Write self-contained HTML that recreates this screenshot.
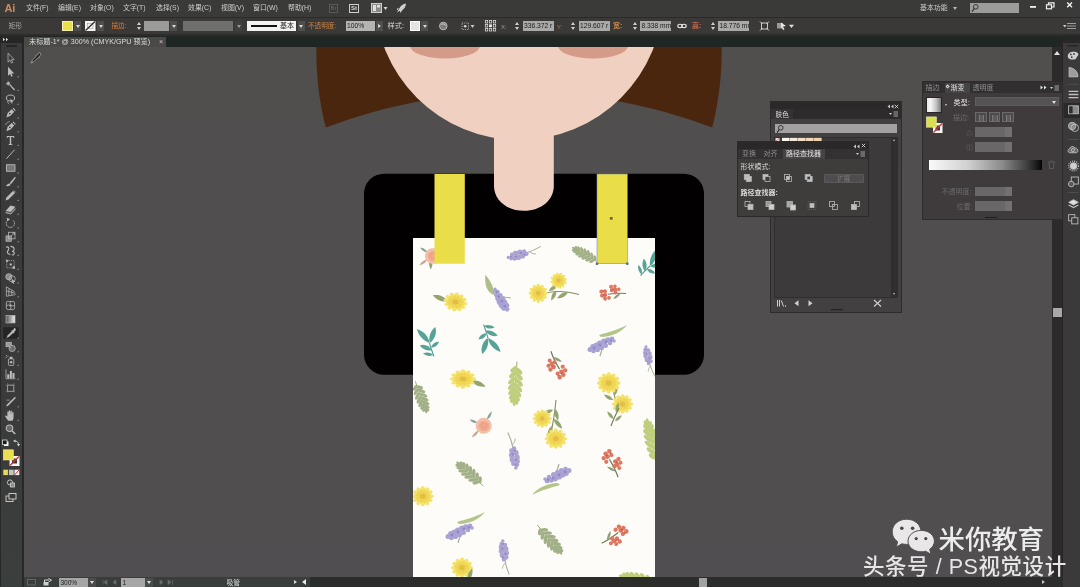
<!DOCTYPE html>
<html lang="zh-CN">
<head>
<meta charset="utf-8">
<title>Adobe Illustrator</title>
<style>
*{box-sizing:border-box;margin:0;padding:0}
html,body{width:1080px;height:587px;overflow:hidden;background:#514f50}
body{font-family:"Liberation Sans","Noto Sans CJK SC",sans-serif;color:#d6d6d6;font-size:7px;line-height:1;position:relative}
.abs{position:absolute}
#app{position:absolute;left:0;top:0;width:1080px;height:587px;overflow:hidden;background:#514f50;will-change:transform}
#canvas{position:absolute;left:0;top:0;width:1080px;height:587px}
#menubar{position:absolute;left:0;top:0;width:1080px;height:17px;background:#3a3b38}
#ctrlbar{position:absolute;left:0;top:17px;width:1080px;height:19px;background:#3a3937;border-top:1px solid #2a2a28}
#tabbar{position:absolute;left:0;top:33.5px;width:1080px;height:13.5px;background:#202623;border-top:2.5px solid #2c2d2b}
#doctab{position:absolute;left:24px;top:37px;width:142px;height:10px;background:#4a4947;color:#dcdcdc;font-size:7.15px;line-height:10px;padding-left:5px;white-space:nowrap}
.mi{position:absolute;top:3.2px;font-size:6.9px;line-height:9px;color:#cecece;white-space:nowrap}
.ct{position:absolute;top:21px;font-size:7.2px;line-height:10px;white-space:nowrap}
.fld{position:absolute;top:21px;height:10px;background:#a9a9a7;color:#1c1c1c;font-size:6.7px;line-height:10px;padding-left:1.5px;white-space:nowrap;overflow:hidden}
.dd{position:absolute;top:21px;height:10px;width:7px;background:#4e4e4c}
.dd:after{content:"";position:absolute;left:1.5px;top:3.5px;border-left:2px solid transparent;border-right:2px solid transparent;border-top:3px solid #d8d8d8}
.spin{position:absolute;top:21px;width:5px;height:10px}
.spin:before{content:"";position:absolute;left:0;top:1px;border-left:2.5px solid transparent;border-right:2.5px solid transparent;border-bottom:3px solid #cfcfcf}
.spin:after{content:"";position:absolute;left:0;top:6px;border-left:2.5px solid transparent;border-right:2.5px solid transparent;border-top:3px solid #cfcfcf}
#tools{position:absolute;left:0;top:36px;width:24px;height:551px;background:linear-gradient(#3a3a3a,#3a3a3a 60%,#3a3e3d);border-left:1px solid #282a29;border-right:2px solid #282828}
#toolhead{position:absolute;left:0;top:36px;width:24px;height:7px;background:#262626}
#toolgrip{position:absolute;left:6px;top:44.5px;width:11px;height:2px;background:#262626}
#vscroll{position:absolute;left:1052px;top:47px;width:10.8px;height:530px;background:#2d2a2b}
#dock{position:absolute;left:1062px;top:36.5px;width:18px;height:551px;background:#3b393a;border-left:1px solid #262425}
#dockhead{position:absolute;left:1062.5px;top:36.5px;width:17.5px;height:6.5px;background:#272727}
#status{position:absolute;left:24px;top:577px;width:1039px;height:10px;background:#2a2d2a}
.panel{position:absolute;background:#423f40;border:1px solid #2c2a2b}
.ptxt{position:absolute;font-size:7px;line-height:9px;white-space:nowrap;color:#d8d8d8}
#wm1{position:absolute;left:938.6px;top:525px;font-size:26.4px;line-height:30px;color:#ececec;white-space:nowrap;letter-spacing:-0.1px;font-weight:500}
#wm2{position:absolute;left:863px;top:554px;font-size:21.5px;line-height:26px;color:#e6e6e6;white-space:nowrap;letter-spacing:0.55px;font-weight:500}
</style>
</head>
<body>
<div id="app">

<!-- ===================== ARTWORK ===================== -->
<svg id="canvas" width="1080" height="587" viewBox="0 0 1080 587">
  <defs>
    <linearGradient id="bgg" x1="0" y1="0" x2="0" y2="1">
      <stop offset="0" stop-color="#504f4c"/>
      <stop offset="0.45" stop-color="#514e50"/>
      <stop offset="1" stop-color="#514e51"/>
    </linearGradient>
    <clipPath id="apronclip"><rect x="413" y="238" width="242" height="339"/></clipPath>
    <filter id="soft" x="-5%" y="-5%" width="110%" height="110%"><feGaussianBlur stdDeviation="0.7"/></filter>

<g id="daisy"><g fill="#f3df55"><ellipse cx="0" cy="-6.3" rx="2.3" ry="4.9" transform="rotate(0)"/><ellipse cx="0" cy="-6.3" rx="2.3" ry="4.9" transform="rotate(30)"/><ellipse cx="0" cy="-6.3" rx="2.3" ry="4.9" transform="rotate(60)"/><ellipse cx="0" cy="-6.3" rx="2.3" ry="4.9" transform="rotate(90)"/><ellipse cx="0" cy="-6.3" rx="2.3" ry="4.9" transform="rotate(120)"/><ellipse cx="0" cy="-6.3" rx="2.3" ry="4.9" transform="rotate(150)"/><ellipse cx="0" cy="-6.3" rx="2.3" ry="4.9" transform="rotate(180)"/><ellipse cx="0" cy="-6.3" rx="2.3" ry="4.9" transform="rotate(210)"/><ellipse cx="0" cy="-6.3" rx="2.3" ry="4.9" transform="rotate(240)"/><ellipse cx="0" cy="-6.3" rx="2.3" ry="4.9" transform="rotate(270)"/><ellipse cx="0" cy="-6.3" rx="2.3" ry="4.9" transform="rotate(300)"/><ellipse cx="0" cy="-6.3" rx="2.3" ry="4.9" transform="rotate(330)"/></g><g fill="#ecd03c"><ellipse cx="0" cy="-4.4" rx="1.5" ry="3.4" transform="rotate(15)"/><ellipse cx="0" cy="-4.4" rx="1.5" ry="3.4" transform="rotate(45)"/><ellipse cx="0" cy="-4.4" rx="1.5" ry="3.4" transform="rotate(75)"/><ellipse cx="0" cy="-4.4" rx="1.5" ry="3.4" transform="rotate(105)"/><ellipse cx="0" cy="-4.4" rx="1.5" ry="3.4" transform="rotate(135)"/><ellipse cx="0" cy="-4.4" rx="1.5" ry="3.4" transform="rotate(165)"/><ellipse cx="0" cy="-4.4" rx="1.5" ry="3.4" transform="rotate(195)"/><ellipse cx="0" cy="-4.4" rx="1.5" ry="3.4" transform="rotate(225)"/><ellipse cx="0" cy="-4.4" rx="1.5" ry="3.4" transform="rotate(255)"/><ellipse cx="0" cy="-4.4" rx="1.5" ry="3.4" transform="rotate(285)"/><ellipse cx="0" cy="-4.4" rx="1.5" ry="3.4" transform="rotate(315)"/><ellipse cx="0" cy="-4.4" rx="1.5" ry="3.4" transform="rotate(345)"/></g><circle r="2.9" fill="#e2b42c"/></g>
<g id="leaf"><path d="M0 0 C-3.2 -4 -2.8 -9 0 -14 C2.8 -9 3.2 -4 0 0Z" fill="#86995c"/></g>
<g id="lav"><path d="M0 3 C0.5 9 1.5 14 3 19" stroke="#9aa58a" stroke-width="1.1" fill="none"/><path d="M0.5 6 C-2 8 -3 10 -3.5 12" stroke="#9aa58a" stroke-width="0.9" fill="none"/><g fill="#a197cc"><circle cx="0" cy="-17" r="1.8"/><circle cx="-1.6" cy="-14" r="2.3"/><circle cx="1.8" cy="-12.5" r="2.4"/><circle cx="-2.4" cy="-10.5" r="2.6"/><circle cx="2.4" cy="-8.5" r="2.7"/><circle cx="-2.6" cy="-6.5" r="2.8"/><circle cx="2.4" cy="-4" r="2.8"/><circle cx="-2.2" cy="-2" r="2.7"/><circle cx="1.8" cy="0.5" r="2.5"/><circle cx="-1" cy="2.5" r="2.2"/></g><g fill="#877db8"><circle cx="-1" cy="-9" r="1.3"/><circle cx="1.2" cy="-3" r="1.3"/><circle cx="0" cy="-14" r="1.1"/><circle cx="-1.5" cy="0.5" r="1.1"/></g></g>
<g id="lavl"><path d="M-3 -8 C5 -10.5 14 -12.5 25 -18 C19 -10.5 10 -6.5 -1 -6 Z" fill="#a9bd7c"/><path d="M2 2 C0 6 -1 9 -2 13" stroke="#9aa58a" stroke-width="1.2" fill="none"/><g fill="#9e96cf"><circle cx="-12" cy="6.5" r="2.5"/><circle cx="-9" cy="4" r="2.9"/><circle cx="-8.5" cy="8" r="2.3"/><circle cx="-5.5" cy="2.5" r="3.1"/><circle cx="-4.5" cy="6.5" r="2.6"/><circle cx="-2" cy="0.5" r="3.1"/><circle cx="-0.5" cy="4.5" r="2.6"/><circle cx="2" cy="-1.5" r="3"/><circle cx="3.5" cy="2.5" r="2.5"/><circle cx="6" cy="-3" r="2.8"/><circle cx="8" cy="0" r="2.3"/><circle cx="10" cy="-4" r="2.4"/><circle cx="12" cy="-2" r="1.8"/></g><g fill="#8279bb"><circle cx="-8" cy="5" r="1.4"/><circle cx="-2" cy="2" r="1.4"/><circle cx="4" cy="-1" r="1.4"/><circle cx="9" cy="-2.5" r="1.2"/></g></g>
<g id="lavc"><g fill="#9e96cf"><circle cx="-12" cy="0.5" r="2.5"/><circle cx="-9" cy="-2" r="2.9"/><circle cx="-8.5" cy="2.5" r="2.4"/><circle cx="-5.5" cy="-2.5" r="3.1"/><circle cx="-4.5" cy="2" r="2.7"/><circle cx="-1.5" cy="-2.5" r="3.1"/><circle cx="-0.5" cy="2" r="2.7"/><circle cx="2.5" cy="-2.2" r="2.9"/><circle cx="4" cy="1.5" r="2.5"/><circle cx="6.5" cy="-1.5" r="2.7"/><circle cx="8.5" cy="1" r="2.2"/><circle cx="10.5" cy="-0.8" r="2.2"/><circle cx="12.5" cy="0" r="1.7"/></g><g fill="#8279bb"><circle cx="-8" cy="0" r="1.4"/><circle cx="-2" cy="0" r="1.4"/><circle cx="4" cy="-0.5" r="1.3"/><circle cx="9" cy="0" r="1.1"/></g></g>
<g id="lleaf"><path d="M0 0 C6 -4.5 15 -4.5 26 0 C15 2.5 6 2.5 0 0Z" fill="#a3b678"/></g>
<g id="fern"><path d="M0 21 L0 -16" stroke="#8b9a60" stroke-width="1" fill="none"/><ellipse cx="0" cy="-2.75" rx="2.1" ry="3.35" transform="translate(0,-15) rotate(-38)"/><ellipse cx="0" cy="-2.75" rx="2.1" ry="3.35" transform="translate(0,-13.5) rotate(38)"/><ellipse cx="0" cy="-3.75" rx="2.1" ry="4.35" transform="translate(0,-10.5) rotate(-40.5)"/><ellipse cx="0" cy="-3.75" rx="2.1" ry="4.35" transform="translate(0,-9) rotate(40.5)"/><ellipse cx="0" cy="-4.5" rx="2.1" ry="5.1" transform="translate(0,-5.5) rotate(-43)"/><ellipse cx="0" cy="-4.5" rx="2.1" ry="5.1" transform="translate(0,-4) rotate(43)"/><ellipse cx="0" cy="-4.75" rx="2.1" ry="5.35" transform="translate(0,-0.5) rotate(-45.5)"/><ellipse cx="0" cy="-4.75" rx="2.1" ry="5.35" transform="translate(0,1) rotate(45.5)"/><ellipse cx="0" cy="-4.75" rx="2.1" ry="5.35" transform="translate(0,4.5) rotate(-48)"/><ellipse cx="0" cy="-4.75" rx="2.1" ry="5.35" transform="translate(0,6) rotate(48)"/><ellipse cx="0" cy="-4.25" rx="2.1" ry="4.85" transform="translate(0,9.5) rotate(-50.5)"/><ellipse cx="0" cy="-4.25" rx="2.1" ry="4.85" transform="translate(0,11) rotate(50.5)"/><ellipse cx="0" cy="-3.5" rx="2.1" ry="4.1" transform="translate(0,14) rotate(-53)"/><ellipse cx="0" cy="-3.5" rx="2.1" ry="4.1" transform="translate(0,15.5) rotate(53)"/><ellipse cx="0" cy="-18" rx="1.6" ry="3.6"/></g>
<g id="teal"><path d="M2.5 14 C1.5 9 0.5 4 0 0" stroke="#3f978a" stroke-width="1.1" fill="none"/><path d="M0 0 C-6 -3 -10 -9 -10.5 -15.5 C-4 -12.5 0 -6.5 0 0Z"/><path d="M0.3 0 C-0.5 -5.5 2.5 -12 8 -15 C9 -9 6 -3 0.3 0Z"/><path d="M1.5 7.5 C-3 8 -7.5 5.5 -10 1 C-5 0 -0.5 3 1.5 7.5Z"/><path d="M1 4.5 C2.5 1 6 -0.5 9.5 0 C8 3.5 4.5 5.5 1 4.5Z"/><path d="M2.3 12.5 C-1 13.5 -5 12.5 -8 9.5 C-4 8 0 9.5 2.3 12.5Z"/></g>
<g id="berry"><path d="M4 15 C3 9 1 3 -2 -4 M1 5 C3 4 5 3 6 1" stroke="#5c6a46" stroke-width="1.2" fill="none"/><path d="M2.5 9 C-1.5 8 -4 6 -5.5 3 C-2 3.5 1 5.5 2.5 9Z" fill="#7c9060"/><g fill="#d8654c"><circle cx="-5" cy="-10" r="2.3"/><circle cx="-1" cy="-12" r="2.3"/><circle cx="-7.5" cy="-6" r="2.2"/><circle cx="-3.5" cy="-7" r="2.4"/><circle cx="0.5" cy="-8" r="2.1"/><circle cx="-5.5" cy="-2" r="2.1"/><circle cx="3.5" cy="-1" r="2.3"/><circle cx="7" cy="-3" r="2.2"/><circle cx="5" cy="2.5" r="2.3"/><circle cx="8.5" cy="1" r="2"/><circle cx="2" cy="3.5" r="2.1"/><circle cx="6.5" cy="6" r="2"/></g><g fill="#c04a38"><circle cx="-4" cy="-8" r="1"/><circle cx="5" cy="0" r="1"/><circle cx="0" cy="-10" r="0.9"/></g></g>
<g id="rose"><path d="M3 -6 C4 -11 6.5 -13 8 -14.5 C8 -10.5 6.5 -7.5 3 -6Z M-6 -3 C-9.5 -6.5 -12.5 -6.5 -14 -6 C-12 -3.5 -9.5 -2 -6 -3Z" fill="#7f968c"/><path d="M-5 4 C-9 6.5 -11 9 -12 11.5 C-8 10.5 -5.5 8 -5 4Z" fill="#c49a88"/><circle r="8" fill="#f3b79c"/><circle r="5.3" cx="0.3" cy="0.2" fill="#ef9f80"/><path d="M-3 0 C-2 -3.5 2 -3.5 3 0 C2.5 3 -2 3 -3 0Z" fill="none" stroke="#e58a6a" stroke-width="0.9"/></g>
  </defs>

  <rect x="0" y="0" width="1080" height="587" fill="url(#bgg)"/>

  <!-- hair -->
  <path d="M316.4 46 L721.6 46 C722 74 719 101 712.2 127.5 C682 116.5 652 107.5 618 101.3 L420 101.3 C386 107.5 356 116.5 325.8 127.5 C319 101 316 74 316.4 46 Z" fill="#4a260e"/>
  <!-- face -->
  <circle cx="519" cy="-4.5" r="144.5" fill="#f0d0c1"/>
  <!-- cheeks -->
  <ellipse cx="445" cy="46" rx="35" ry="12.5" fill="#d39b88"/>
  <ellipse cx="593" cy="46" rx="35" ry="12.5" fill="#d39b88"/>
  <!-- shirt -->
  <rect x="364" y="173.7" width="340" height="201" rx="20" ry="20" fill="#020001"/>
  <!-- neck -->
  <path d="M494 120 L553.8 120 L553.8 186 C553.8 200 541 210.8 523.9 210.8 C506.8 210.8 494 200 494 186 Z" fill="#f0d0c1"/>
  <!-- apron -->
  <rect x="413" y="238" width="242" height="339" fill="#fdfcf8"/>
  <g clip-path="url(#apronclip)" filter="url(#soft)" opacity="0.88">
<use href="#leaf" transform="translate(430.5,259) rotate(178) scale(0.75,0.75)"/>
<use href="#rose" transform="translate(432.8,256) rotate(10) scale(0.98,0.98)"/>
<use href="#lav" transform="translate(524,253.5) rotate(-104) scale(0.95,0.95)"/>
<use href="#fern" transform="translate(585.5,255) rotate(-60) scale(0.72,0.72)" fill="#96a678"/>
<use href="#teal" transform="translate(650,266) rotate(55) scale(0.95,0.95)" fill="#41978a"/>
<use href="#lleaf" transform="translate(494,295) rotate(-113) scale(0.85,1.15)"/>
<path d="M499 296 C503 297 507 297.5 511 298" stroke="#9aa58a" stroke-width="1" fill="none"/>
<use href="#lavc" transform="translate(501,299.5) rotate(240) scale(0.95,0.95)"/>
<use href="#leaf" transform="translate(447,301) rotate(-68) scale(1.1,1.1)"/>
<use href="#daisy" transform="translate(455.5,302) rotate(10) scale(1.08,0.85)"/>
<path d="M540 295 C552 290 566 291 579 294.5" stroke="#6f7f52" stroke-width="1.1" fill="none"/>
<use href="#leaf" transform="translate(556,290.5) rotate(-155) scale(0.8,0.8)"/>
<use href="#leaf" transform="translate(568,292) rotate(-120) scale(0.9,0.9)"/>
<use href="#leaf" transform="translate(549,291) rotate(55) scale(0.8,0.8)"/>
<use href="#daisy" transform="translate(538.3,293.3) rotate(0) scale(0.86,0.86)"/>
<use href="#daisy" transform="translate(558.6,280.6) rotate(20) scale(0.74,0.74)"/>
<use href="#berry" transform="translate(612,293.5) rotate(-75) scale(0.9,0.9)"/>
<use href="#teal" transform="translate(429.5,343) rotate(-8) scale(1,1)" fill="#41978a"/>
<use href="#teal" transform="translate(488,338) rotate(172) scale(1,1)" fill="#41978a"/>
<use href="#lavl" transform="translate(602,343) rotate(0) scale(1,1)"/>
<use href="#lav" transform="translate(649,361) rotate(-12) scale(0.85,0.85)"/>
<use href="#berry" transform="translate(557,365.5) rotate(172) scale(1,1)"/>
<use href="#leaf" transform="translate(472,381) rotate(112) scale(1.05,1.05)"/>
<use href="#daisy" transform="translate(463,379) rotate(0) scale(1.18,0.86)"/>
<use href="#fern" transform="translate(515.5,383.5) rotate(184) scale(0.95,1.05)" fill="#b6c86a"/>
<path d="M613 387 C614 394 615 400 618 410" stroke="#6f7f52" stroke-width="1.1" fill="none"/>
<use href="#leaf" transform="translate(614,396) rotate(15) scale(0.85,0.85)"/>
<use href="#leaf" transform="translate(613,400) rotate(-60) scale(0.75,0.75)"/>
<use href="#daisy" transform="translate(608.7,383) rotate(0) scale(1.05,0.95)"/>
<use href="#daisy" transform="translate(622.5,404) rotate(0) scale(0.95,0.88)"/>
<use href="#leaf" transform="translate(616,412) rotate(15) scale(0.7,0.7)"/>
<use href="#leaf" transform="translate(613.5,419) rotate(-40) scale(0.7,0.7)"/>
<use href="#leaf" transform="translate(615,421) rotate(50) scale(0.65,0.65)"/>
<path d="M619 408 C616 414 613 420 611 426" stroke="#5f6f52" stroke-width="1.2" fill="none"/>
<use href="#fern" transform="translate(421,397) rotate(160) scale(0.8,0.8)" fill="#96a678"/>
<use href="#rose" transform="translate(483.7,425.8) rotate(0) scale(1,1)"/>
<path d="M556 400 C555 410 554 420 551 432" stroke="#6f7f52" stroke-width="1.1" fill="none"/>
<use href="#leaf" transform="translate(555,409) rotate(165) scale(0.85,0.85)"/>
<use href="#leaf" transform="translate(554,419) rotate(140) scale(0.9,0.9)"/>
<use href="#leaf" transform="translate(552,426) rotate(-160) scale(0.85,0.85)"/>
<use href="#leaf" transform="translate(553,410) rotate(-110) scale(0.8,0.8)"/>
<use href="#daisy" transform="translate(542.2,418.6) rotate(0) scale(0.86,0.82)"/>
<use href="#daisy" transform="translate(555.8,438.7) rotate(0) scale(1,0.9)"/>
<use href="#fern" transform="translate(652,442.5) rotate(-12) scale(0.9,1.15)" fill="#b6c86a"/>
<use href="#lav" transform="translate(513.5,451) rotate(172) scale(1,1)"/>
<use href="#berry" transform="translate(612,463) rotate(-8) scale(1,1)"/>
<use href="#fern" transform="translate(470,474) rotate(-48) scale(0.85,0.85)" fill="#96a678"/>
<use href="#lavl" transform="translate(557,477) rotate(180) scale(1,1)"/>
<use href="#daisy" transform="translate(422.8,496.2) rotate(0) scale(0.98,0.9)"/>
<use href="#lavl" transform="translate(460,530) rotate(0) scale(1,1)"/>
<use href="#fern" transform="translate(549.5,539.5) rotate(140) scale(0.85,0.9)" fill="#96a678"/>
<use href="#berry" transform="translate(615,535.5) rotate(75) scale(1,1)"/>
<use href="#lav" transform="translate(504.5,557) rotate(-6) scale(0.95,0.95)"/>
<use href="#daisy" transform="translate(462,567.7) rotate(0) scale(0.98,0.9)"/>
<use href="#leaf" transform="translate(468,580) rotate(20) scale(0.9,0.9)"/>
<use href="#fern" transform="translate(640,580) rotate(-78) scale(0.9,1)" fill="#b6c86a"/>
  </g>
  <!-- straps -->
  <rect x="434.5" y="174" width="30.3" height="89.7" fill="#eade48"/>
  <rect x="597" y="174" width="30.3" height="89.7" fill="#eade48"/>
  <rect x="597" y="174" width="30.3" height="89.7" fill="none" stroke="#7a8fb0" stroke-width="0.6"/>
  <rect x="595.8" y="262.5" width="2.4" height="2.4" fill="#5a6a80"/><rect x="626.1" y="262.5" width="2.4" height="2.4" fill="#5a6a80"/>
  <rect x="609.9" y="217" width="2.7" height="2.7" fill="#7a5a30"/>
</svg>

<!-- ===================== TOP BARS ===================== -->
<div id="menubar"></div>
<div id="ctrlbar"></div>
<div id="tabbar"></div>
<div id="doctab">未标题-1* @ 300% (CMYK/GPU 预览)<span style="position:absolute;left:135px;top:0;color:#cfcfcf">×</span></div>

<!-- menu bar -->
<div class="abs" style="left:4.5px;top:1.5px;font-size:11px;line-height:12px;font-weight:bold;color:#d48a5a;letter-spacing:-0.2px">Ai</div>
<div class="mi" style="left:26px">文件(F)</div>
<div class="mi" style="left:58px">编辑(E)</div>
<div class="mi" style="left:90px">对象(O)</div>
<div class="mi" style="left:123px">文字(T)</div>
<div class="mi" style="left:156px">选择(S)</div>
<div class="mi" style="left:188px">效果(C)</div>
<div class="mi" style="left:221px">视图(V)</div>
<div class="mi" style="left:253px">窗口(W)</div>
<div class="mi" style="left:288px">帮助(H)</div>
<div class="abs" style="left:329px;top:3.5px;width:9px;height:9px;border:1px solid #5a5a58;color:#6a6a68;font-size:6px;line-height:7px;text-align:center">Br</div>
<div class="abs" style="left:349px;top:3.5px;width:10px;height:9px;border:1px solid #cfcfcf;color:#dcdcdc;font-size:6px;line-height:7px;text-align:center;font-weight:bold">St</div>
<svg class="abs" style="left:370px;top:2px" width="40" height="13" viewBox="0 0 40 13">
  <rect x="1.5" y="1.5" width="10" height="9" fill="#8a8a88" stroke="#cfcfcf" stroke-width="1"/>
  <rect x="3" y="3" width="3" height="6" fill="#e0e0e0"/>
  <rect x="7" y="3" width="3" height="2.5" fill="#e0e0e0"/>
  <path d="M13.5 5 L17.5 5 L15.5 8 Z" fill="#d8d8d8"/>
  <path d="M27 10.5 L29.5 6 C31 3.5 33 2 36 1.5 C35.8 4.5 34.5 6.8 32 8.5 L30.5 11 L29.8 8.8 Z M26.5 7 L28.8 5.8 L27.8 8.2Z" fill="#cfcfcf"/>
</svg>
<div class="mi" style="left:920px;color:#d0d0ce">基本功能</div>
<div class="abs" style="left:953px;top:7px;border-left:2px solid transparent;border-right:2px solid transparent;border-top:3px solid #b8b8b8"></div>
<div class="abs" style="left:970px;top:3px;width:49px;height:9.5px;background:#9c9c9a"></div>
<svg class="abs" style="left:971px;top:3px" width="10" height="10" viewBox="0 0 10 10"><circle cx="4.8" cy="3.8" r="2.3" fill="none" stroke="#2e2e2e" stroke-width="0.9"/><path d="M3.2 5.6 L1 8.6" stroke="#2e2e2e" stroke-width="1.1"/></svg>
<svg class="abs" style="left:1026px;top:0" width="54" height="16" viewBox="0 0 54 16">
  <rect x="4" y="6" width="6" height="1.8" fill="#f0f0f0"/>
  <rect x="20.5" y="4.8" width="5" height="4" fill="none" stroke="#f0f0f0" stroke-width="1.2"/>
  <path d="M22.5 4.5 V2.8 H28 V7 H26" fill="none" stroke="#f0f0f0" stroke-width="1.2"/>
  <path d="M41.2 2.6 L46 7.2 M46 2.6 L41.2 7.2" stroke="#f4f4f4" stroke-width="1.4"/>
</svg>

<!-- control bar -->
<div class="ct" style="left:8.5px;color:#a8a8a6;font-size:6.8px">矩形</div>
<div class="abs" style="left:62px;top:21px;width:10.5px;height:10px;background:#e9df4d;border:0.5px solid #f4f0b0"></div>
<div class="dd" style="left:74px"></div>
<svg class="abs" style="left:85px;top:21px" width="11" height="10" viewBox="0 0 11 10"><rect width="10.5" height="10" fill="#f4f4f4"/><rect x="2.5" y="2.5" width="5.5" height="5" fill="#f4f4f4" stroke="#888" stroke-width="0.5"/><path d="M0.5 9.5 L10 0.5" stroke="#3a2a2a" stroke-width="1.3"/></svg>
<div class="dd" style="left:97px"></div>
<div class="ct" style="left:111.5px;color:#d08040;font-size:6.6px">描边:</div>
<div class="spin" style="left:137px"></div>
<div class="fld" style="left:144px;width:25px;background:#9b9b99"></div>
<div class="dd" style="left:170px"></div>
<div class="fld" style="left:183px;width:50px;background:#6f6f6d"></div>
<div class="dd" style="left:235px;background:#444442;opacity:.6"></div>
<div class="fld" style="left:247px;width:49px;background:#f2f2f0;color:#222;font-size:7px"><span style="position:absolute;left:3.5px;top:4.3px;width:26px;height:1.6px;background:#111"></span><span style="position:absolute;left:33px;top:0">基本</span></div>
<div class="dd" style="left:297.5px"></div>
<div class="ct" style="left:308px;color:#d08040;font-size:6.6px">不透明度:</div>
<div class="fld" style="left:345.5px;width:29px;background:#b4b4b2">100%</div>
<div class="abs" style="left:376px;top:21px;width:7px;height:10px;background:#4e4e4c"><span style="position:absolute;left:2.2px;top:2.5px;border-top:2.5px solid transparent;border-bottom:2.5px solid transparent;border-left:3.5px solid #d8d8d8"></span></div>
<div class="ct" style="left:387.5px;color:#d8d8d6">样式:</div>
<div class="abs" style="left:410px;top:21px;width:9.5px;height:10px;background:#e4e4e2;border:0.5px solid #fff"></div>
<div class="dd" style="left:421px"></div>
<svg class="abs" style="left:436px;top:19px" width="70" height="14" viewBox="0 0 70 14">
  <circle cx="7.3" cy="7" r="3.8" fill="#7c7c7a" stroke="#bdbdbb" stroke-width="0.9"/>
  <path d="M5.5 5.5 A2.4 2.4 0 0 1 9.3 6.4" stroke="#e2e2e2" stroke-width="0.9" fill="none"/>
  <rect x="26" y="4" width="6.5" height="6.5" fill="none" stroke="#bdbdbb" stroke-width="0.8" stroke-dasharray="1.2 1"/>
  <circle cx="29.2" cy="7.2" r="1.3" fill="#d8d8d8"/>
  <path d="M34.5 6 L38.5 6 L36.5 9 Z" fill="#c8c8c8"/>
  <g fill="none" stroke="#e6e6e6" stroke-width="0.7">
    <rect x="49.3" y="1.6" width="2.4" height="2.4"/><rect x="53.3" y="1.6" width="2.4" height="2.4"/><rect x="57.3" y="1.6" width="2.4" height="2.4"/>
    <rect x="49.3" y="5.6" width="2.4" height="2.4"/><rect x="57.3" y="5.6" width="2.4" height="2.4"/>
    <rect x="49.3" y="9.6" width="2.4" height="2.4"/><rect x="53.3" y="9.6" width="2.4" height="2.4"/><rect x="57.3" y="9.6" width="2.4" height="2.4"/>
  </g>
  <rect x="53.1" y="5.4" width="2.8" height="2.8" fill="#f0f0f0"/>
</svg>
<div class="ct" style="left:501px;top:22px;font-size:6px;color:#9a9a98">X:</div>
<div class="spin" style="left:515px"></div>
<div class="fld" style="left:522.5px;width:31px">336.372 r</div>
<div class="ct" style="left:557px;top:22px;font-size:6px;color:#b07a5a">Y:</div>
<div class="spin" style="left:571px"></div>
<div class="fld" style="left:578.5px;width:31px">129.607 r</div>
<div class="ct" style="left:613px;top:21px;font-size:7px;color:#c08a4a;font-weight:bold">宽:</div>
<div class="spin" style="left:632.5px"></div>
<div class="fld" style="left:640px;width:31px">8.338 mm</div>
<svg class="abs" style="left:676px;top:21px" width="12" height="10" viewBox="0 0 12 10"><ellipse cx="4" cy="5" rx="2.2" ry="1.7" fill="none" stroke="#e8e8e8" stroke-width="1.1"/><ellipse cx="8" cy="5" rx="2.2" ry="1.7" fill="none" stroke="#e8e8e8" stroke-width="1.1"/></svg>
<div class="ct" style="left:692px;top:21px;font-size:7px;color:#c86a50;font-weight:bold">高:</div>
<div class="spin" style="left:710.5px"></div>
<div class="fld" style="left:718px;width:31px">18.776 mm</div>
<svg class="abs" style="left:758px;top:19px" width="40" height="14" viewBox="0 0 40 14">
  <rect x="3.5" y="4" width="6" height="6" fill="none" stroke="#d8d8d8" stroke-width="0.9"/>
  <path d="M2 2.5 L4.5 5 M11 2.5 L8.5 5 M2 11.5 L4.5 9 M11 11.5 L8.5 9" stroke="#d8d8d8" stroke-width="0.9"/>
  <rect x="19" y="4" width="6" height="5.5" fill="#9a9a98"/>
  <path d="M23 3.5 L28 7 L25 7.5 L26.5 10.5 L25 11 L23.8 8 L23 9.5 Z" fill="#e8e8e8"/>
  <path d="M31 5.8 L36 5.8 L33.5 9 Z" fill="#e0e0e0"/>
</svg>
<svg class="abs" style="left:1062px;top:20px" width="16" height="12" viewBox="0 0 16 12"><path d="M5 3.5 H14 M5 6 H14 M5 8.5 H14" stroke="#a8a8a6" stroke-width="0.9"/><path d="M1 5 L4.5 5 L2.8 7.5Z" fill="#c8c8c6"/></svg>
<svg class="abs" style="left:29px;top:50.5px" width="13.5" height="15" viewBox="0 0 16 18"><path d="M12.5 2 C14 2.5 14.5 4 13.5 5.2 L11.8 6.8 L12.3 7.5 L11.3 8.5 L10.6 7.9 L5.5 13 L3.5 13.6 L3 14.5 L2.4 14 L3.2 13 L3.8 11.2 L8.9 6.2 L8.3 5.5 L9.3 4.5 L10 5 L11.5 3.2 C11.8 2.5 12 2.2 12.5 2 Z" fill="#141414" stroke="#e4e4e4" stroke-width="0.7"/></svg>


<!-- ===================== LEFT TOOLS ===================== -->
<div id="tools"></div><div id="toolhead"></div><div id="toolgrip"></div>
<svg class="abs" style="left:0;top:0" width="24" height="587" viewBox="0 0 24 587">
<g transform="translate(10.5,58)"><g transform="scale(0.82)"><path d="M-3 -6 L-3 5 L-0.5 2.6 L1.2 6.2 L2.8 5.4 L1.1 2 L4.5 2 Z" fill="#3b3b3a" stroke="#bcbcbc" stroke-width="0.9"/></g></g>
<g transform="translate(10.5,71.75)"><g transform="scale(0.82)"><path d="M-3 -6 L-3 5 L-0.5 2.6 L1.2 6.2 L2.8 5.4 L1.1 2 L4.5 2 Z" fill="#bcbcbc"/></g><path d="M6.6 5.6 L8.2 5.6 L8.2 4 Z" fill="#a8a8a8"/></g>
<g transform="translate(10.5,85.5)"><g transform="scale(0.82)"><path d="M-1 -1 L5 5.5" stroke="#bcbcbc" stroke-width="1.5"/><path d="M-3 -6 L-2.2 -3.8 L0 -4.5 L-1.4 -2.6 L0.3 -1 L-2 -1.2 L-3 1 L-3.6 -1.3 L-6 -1.8 L-4 -3 Z" fill="#bcbcbc"/></g><path d="M6.6 5.6 L8.2 5.6 L8.2 4 Z" fill="#a8a8a8"/></g>
<g transform="translate(10.5,99.25)"><g transform="scale(0.82)"><ellipse cx="0" cy="-1.5" rx="5" ry="3.6" fill="none" stroke="#bcbcbc" stroke-width="1.2"/><path d="M-3 1.5 C-4 3 -3 5 -1.5 6" fill="none" stroke="#bcbcbc" stroke-width="1"/><path d="M0 -1 L3.5 3 L1.5 3 L2.5 5 L1.5 5.4 L0.6 3.4 L0 4.5Z" fill="#bcbcbc"/></g><path d="M6.6 5.6 L8.2 5.6 L8.2 4 Z" fill="#a8a8a8"/></g>
<g transform="translate(10.5,113)"><g transform="scale(0.82)"><path d="M-5 5.5 L-3.5 0 L1.5 -4.5 L4.5 -1.5 L0 3.5 Z" fill="#bcbcbc"/><path d="M2.5 -5.5 L5.5 -2.5 L6.3 -3.5 L3.4 -6.4Z" fill="#bcbcbc"/><circle cx="-0.8" cy="0.8" r="1" fill="#3b3b3a"/></g><path d="M6.6 5.6 L8.2 5.6 L8.2 4 Z" fill="#a8a8a8"/></g>
<g transform="translate(10.5,126.75)"><g transform="scale(0.82)"><path d="M-5 5.5 L-3.5 0 L1.5 -4.5 L4.5 -1.5 L0 3.5 Z" fill="#bcbcbc"/><path d="M2.5 -5.5 L5.5 -2.5 L6.3 -3.5 L3.4 -6.4Z" fill="#bcbcbc"/><circle cx="-0.8" cy="0.8" r="1" fill="#3b3b3a"/><path d="M-6 -2 C-5 -5 -3 -6 -1 -6" fill="none" stroke="#bcbcbc" stroke-width="0.9"/></g><path d="M6.6 5.6 L8.2 5.6 L8.2 4 Z" fill="#a8a8a8"/></g>
<g transform="translate(10.5,140.5)"><g transform="scale(0.82)"><path d="M-4.5 -5.5 H4.5 V-3 H3.6 L3.2 -4.3 H0.9 V4.3 L2.3 4.7 V5.5 H-2.3 V4.7 L-0.9 4.3 V-4.3 H-3.2 L-3.6 -3 H-4.5 Z" fill="#bcbcbc"/></g><path d="M6.6 5.6 L8.2 5.6 L8.2 4 Z" fill="#a8a8a8"/></g>
<g transform="translate(10.5,154.25)"><g transform="scale(0.82)"><path d="M-5 5.5 L5 -5.5" stroke="#bcbcbc" stroke-width="1.2"/></g><path d="M6.6 5.6 L8.2 5.6 L8.2 4 Z" fill="#a8a8a8"/></g>
<g transform="translate(10.5,168)"><g transform="scale(0.82)"><rect x="-5" y="-4" width="10.5" height="8" fill="#777775" stroke="#bcbcbc" stroke-width="1"/></g><path d="M6.6 5.6 L8.2 5.6 L8.2 4 Z" fill="#a8a8a8"/></g>
<g transform="translate(10.5,181.75)"><g transform="scale(0.82)"><path d="M5.5 -6 L-1 1.5 L0.5 3 L6.5 -5 Z" fill="#bcbcbc"/><path d="M-1.5 2 C-3.5 2 -4 4 -6 5 C-3.5 6 -0.5 5.5 0 3.5 Z" fill="#bcbcbc"/></g><path d="M6.6 5.6 L8.2 5.6 L8.2 4 Z" fill="#a8a8a8"/></g>
<g transform="translate(10.5,195.5)"><g transform="scale(0.82)"><path d="M-6 6 L-5 2.5 L3 -5.5 L5.5 -3 L-2.5 5 Z" fill="#bcbcbc"/><path d="M3.8 -6.3 L6.3 -3.8" stroke="#bcbcbc" stroke-width="1"/></g><path d="M6.6 5.6 L8.2 5.6 L8.2 4 Z" fill="#a8a8a8"/></g>
<g transform="translate(10.5,209.25)"><g transform="scale(0.82)"><path d="M-6 2 L0 -4.5 L6 -3 L0.5 3.5 Z" fill="#bcbcbc"/><path d="M-6 3 L0.5 4.6 L6 -1.8 L6 0.5 L0.5 6.5 L-6 5 Z" fill="#9a9a98"/></g><path d="M6.6 5.6 L8.2 5.6 L8.2 4 Z" fill="#a8a8a8"/></g>
<g transform="translate(10.5,223)"><g transform="scale(0.82)"><path d="M-2.5 -4 A5 5 0 1 0 3.5 -3" fill="none" stroke="#bcbcbc" stroke-width="1.2" stroke-dasharray="2.2 1"/><path d="M-4.5 -6.5 L-0.5 -4.5 L-4 -2Z" fill="#bcbcbc"/></g><path d="M6.6 5.6 L8.2 5.6 L8.2 4 Z" fill="#a8a8a8"/></g>
<g transform="translate(10.5,236.75)"><g transform="scale(0.82)"><rect x="-5.5" y="-1" width="6.5" height="6.5" fill="#8a8a88" stroke="#bcbcbc" stroke-width="0.9"/><rect x="-2.5" y="-5.5" width="8" height="8" fill="none" stroke="#bcbcbc" stroke-width="0.9"/><path d="M1 -1 L4.5 -4.5 M2 -4.7 H4.7 V-2" stroke="#bcbcbc" stroke-width="0.9" fill="none"/></g><path d="M6.6 5.6 L8.2 5.6 L8.2 4 Z" fill="#a8a8a8"/></g>
<g transform="translate(10.5,250.5)"><g transform="scale(0.82)"><path d="M-5.5 -4 C-2 -5.5 -1 -2 -3 0 C-5 2 -3 5 0 4.5" fill="none" stroke="#bcbcbc" stroke-width="1.3"/><path d="M0 -5 C5 -5 6 0 2 1 C6 2 5 6 1.5 5.5" fill="none" stroke="#bcbcbc" stroke-width="1.3"/></g><path d="M6.6 5.6 L8.2 5.6 L8.2 4 Z" fill="#a8a8a8"/></g>
<g transform="translate(10.5,264.25)"><g transform="scale(0.82)"><rect x="-4.5" y="-4.5" width="9" height="9" fill="none" stroke="#bcbcbc" stroke-width="0.8" stroke-dasharray="1.5 1"/><path d="M-6 -6 L-2 -4.5 L-4.5 -2Z" fill="#bcbcbc"/><rect x="2.5" y="2.5" width="3" height="3" fill="#bcbcbc"/><rect x="-1" y="-1" width="2.5" height="2.5" fill="#bcbcbc"/></g><path d="M6.6 5.6 L8.2 5.6 L8.2 4 Z" fill="#a8a8a8"/></g>
<g transform="translate(10.5,278)"><g transform="scale(0.82)"><circle cx="-2" cy="-1.5" r="3.8" fill="#8a8a88" stroke="#bcbcbc" stroke-width="0.9"/><circle cx="2" cy="1" r="3.8" fill="none" stroke="#bcbcbc" stroke-width="0.9"/><path d="M1.5 1 L6 5 L3.8 5 L4.8 7 L3.8 7.3 L3 5.4 L1.5 6.5Z" fill="#bcbcbc"/></g><path d="M6.6 5.6 L8.2 5.6 L8.2 4 Z" fill="#a8a8a8"/></g>
<g transform="translate(10.5,291.75)"><g transform="scale(0.82)"><path d="M-5 -6 V5.5 L6 3.5 M-2 -4 V5 M1.5 -2 V4.3 M-5 -6 L5 0 M-5 -1 L6 2" fill="none" stroke="#bcbcbc" stroke-width="0.9"/></g><path d="M6.6 5.6 L8.2 5.6 L8.2 4 Z" fill="#a8a8a8"/></g>
<g transform="translate(10.5,305.5)"><g transform="scale(0.82)"><rect x="-5" y="-5" width="10" height="10" rx="2" fill="none" stroke="#bcbcbc" stroke-width="0.9"/><path d="M-5 0 C-2 -2 2 2 5 0 M0 -5 C-2 -2 2 2 0 5" fill="none" stroke="#bcbcbc" stroke-width="0.9"/><circle r="1.3" fill="#bcbcbc"/></g></g>
<g transform="translate(10.5,319.25)"><g transform="scale(0.82)"><defs><linearGradient id="tg" x1="0" x2="1"><stop offset="0" stop-color="#555"/><stop offset="1" stop-color="#f0f0f0"/></linearGradient></defs><rect x="-5.5" y="-4.5" width="11" height="9" fill="url(#tg)" stroke="#bcbcbc" stroke-width="0.8"/></g></g>
<g transform="translate(10.5,333)"><g transform="scale(0.82)"><rect x="-9" y="-7" width="19" height="14" fill="#252525"/><path d="M5 -6 C6.5 -5.5 7 -4 6 -2.8 L4.3 -1.2 L4.8 -0.5 L3.8 0.5 L3.1 -0.1 L-2 5 L-4 5.6 L-4.5 6.5 L-5.1 6 L-4.3 5 L-3.7 3.2 L1.4 -1.8 L0.8 -2.5 L1.8 -3.5 L2.5 -3 L4 -4.8 C4.3 -5.5 4.5 -5.8 5 -6 Z" fill="#bcbcbc"/></g><path d="M6.6 5.6 L8.2 5.6 L8.2 4 Z" fill="#a8a8a8"/></g>
<g transform="translate(10.5,346.75)"><g transform="scale(0.82)"><rect x="-5.5" y="-5.5" width="6.5" height="5.5" fill="#9a9a98" stroke="#bcbcbc" stroke-width="0.8"/><circle cx="2" cy="2" r="3.8" fill="#6a6a68" stroke="#bcbcbc" stroke-width="0.9"/><path d="M-2 -1 L1 2" stroke="#bcbcbc" stroke-width="0.9"/></g><path d="M6.6 5.6 L8.2 5.6 L8.2 4 Z" fill="#a8a8a8"/></g>
<g transform="translate(10.5,360.5)"><g transform="scale(0.82)"><rect x="-2.5" y="-2" width="6.5" height="8" rx="1" fill="none" stroke="#bcbcbc" stroke-width="1"/><rect x="-1" y="-4.5" width="3.5" height="2.5" fill="#bcbcbc"/><circle cx="0.8" cy="2" r="1.5" fill="#bcbcbc"/><path d="M-5.5 -6 h1.2 M-6 -3.5 h1.2 M-3.8 -5 h1.2" stroke="#bcbcbc" stroke-width="1"/></g><path d="M6.6 5.6 L8.2 5.6 L8.2 4 Z" fill="#a8a8a8"/></g>
<g transform="translate(10.5,374.25)"><g transform="scale(0.82)"><path d="M-5.5 -6 V5.5 H6" fill="none" stroke="#bcbcbc" stroke-width="0.9"/><rect x="-4" y="0" width="2.5" height="5" fill="#bcbcbc"/><rect x="-0.8" y="-4" width="2.5" height="9" fill="#bcbcbc"/><rect x="2.4" y="-1.5" width="2.5" height="6.5" fill="#bcbcbc"/></g><path d="M6.6 5.6 L8.2 5.6 L8.2 4 Z" fill="#a8a8a8"/></g>
<g transform="translate(10.5,388)"><g transform="scale(0.82)"><rect x="-3.5" y="-3.5" width="7.5" height="7.5" fill="none" stroke="#bcbcbc" stroke-width="0.9"/><path d="M-6 -3.5 H6.5 M-6 4 H6.5 M-3.5 -6 V6.5 M4 -6 V6.5" stroke="#8a8a88" stroke-width="0.7" stroke-dasharray="1.5 1"/></g></g>
<g transform="translate(10.5,401.75)"><g transform="scale(0.82)"><path d="M5.5 -6 L-4 3 L-5.5 6 L-2.5 4.5 L6.5 -4.5 Z" fill="#bcbcbc"/><path d="M-5 -2 L-1 -2" stroke="#bcbcbc" stroke-width="0.8"/></g><path d="M6.6 5.6 L8.2 5.6 L8.2 4 Z" fill="#a8a8a8"/></g>
<g transform="translate(10.5,415.5)"><g transform="scale(0.82)"><path d="M-3 6.5 C-4 4 -6 2.5 -6.5 0.5 C-6 -0.5 -5 -0.3 -3.8 1.3 L-3.8 -4.5 C-3.6 -5.5 -2.4 -5.5 -2.3 -4.5 L-2.2 -1 L-2 -5.8 C-1.8 -6.8 -0.5 -6.8 -0.4 -5.8 L-0.3 -1 L0 -5.3 C0.2 -6.3 1.5 -6.3 1.6 -5.3 L1.7 -0.8 L2.2 -4 C2.5 -5 3.7 -4.9 3.7 -3.9 L3.7 2 C3.7 4 3 5 2.5 6.5 Z" fill="#bcbcbc"/></g><path d="M6.6 5.6 L8.2 5.6 L8.2 4 Z" fill="#a8a8a8"/></g>
<g transform="translate(10.5,429.25)"><g transform="scale(0.82)"><circle cx="-1.2" cy="-1.2" r="4" fill="#6a6a68" stroke="#bcbcbc" stroke-width="1.3"/><path d="M1.8 1.8 L5.8 5.8" stroke="#bcbcbc" stroke-width="1.9"/></g></g>
<rect x="4" y="441.5" width="4.5" height="4.5" fill="#f4f4f4"/><rect x="2.5" y="440" width="4.5" height="4.5" fill="#1a1a1a" stroke="#f4f4f4" stroke-width="0.7"/>
<g transform="translate(0,1)"><path d="M14.5 440 C16.5 439.5 18.5 441 18.5 443.5" fill="none" stroke="#cfcfcf" stroke-width="0.9"/><path d="M13 440 L15.5 438.4 L15.5 441.6Z M18.5 445.5 L16.9 443 L20.1 443Z" fill="#cfcfcf"/></g>
<rect x="9.5" y="456" width="10" height="10" fill="#f6f6f6"/><rect x="12" y="458.5" width="5" height="5" fill="#3b3b3a"/><path d="M10 465.5 L19 456.5" stroke="#d03030" stroke-width="1.2"/>
<rect x="3.3" y="449.8" width="10.2" height="10.2" fill="#eadf50" stroke="#f6f2c0" stroke-width="0.5"/>
<rect x="3.3" y="469.7" width="4.6" height="5.4" fill="#e6dc55"/>
<rect x="8.9" y="469.7" width="4.8" height="5.4" fill="#c8c4c0"/>
<rect x="14.5" y="469.7" width="4.8" height="5.4" fill="#f2f2f2"/><path d="M14.8 474.8 L19 470" stroke="#d03030" stroke-width="1"/>
<circle cx="10" cy="482.5" r="2.6" fill="none" stroke="#cfcfcf" stroke-width="0.9"/><rect x="10.5" y="483" width="4" height="4" fill="#8a8a88" stroke="#cfcfcf" stroke-width="0.8"/>
<rect x="6" y="496" width="7" height="5.5" fill="#3b3b3a" stroke="#d4d4d4" stroke-width="0.9"/><rect x="9" y="493.5" width="7" height="5.5" fill="#3b3b3a" stroke="#d4d4d4" stroke-width="0.9"/>
</svg>


<!-- ===================== RIGHT / BOTTOM ===================== -->
<div id="vscroll"></div>
<div id="dock"></div><div id="dockhead"></div>
<div id="status"></div>
<svg class="abs" style="left:2px;top:37px" width="8" height="5" viewBox="0 0 8 5"><path d="M1 0.8 L3 2.5 L1 4.2Z M4 0.8 L6 2.5 L4 4.2Z" fill="#e4e4e4"/></svg>
<!-- status bar -->
<div class="abs" style="left:24px;top:577px;width:286px;height:10px;background:#3a3e3b"></div>
<svg class="abs" style="left:24px;top:577px" width="40" height="10" viewBox="0 0 40 10"><rect x="3.5" y="2.5" width="8" height="5.5" fill="none" stroke="#6e6e6c" stroke-width="0.8"/><path d="M20.5 7.5 V3 H25 M24.5 1.5 L27.5 3.2 L24.5 5" fill="none" stroke="#d8d8d8" stroke-width="1"/><rect x="19.5" y="5" width="5" height="3.5" fill="#d0d0d0"/></svg>
<div class="abs" style="left:59px;top:577.5px;width:28.5px;height:9px;background:#a6a6a4;color:#1a1a1a;font-size:6.5px;line-height:9px;padding-left:1.5px">300%</div>
<div class="abs" style="left:88px;top:577.5px;width:8px;height:9px;background:#4a4c4a"><span style="position:absolute;left:1.8px;top:3.2px;border-left:2.2px solid transparent;border-right:2.2px solid transparent;border-top:3px solid #e0e0e0"></span></div>
<svg class="abs" style="left:98px;top:577px" width="24" height="10" viewBox="0 0 24 10"><path d="M5 3 V7.5 M9 3 L6 5.2 L9 7.5Z M18 3 L15 5.2 L18 7.5Z" fill="#6a6c6a" stroke="#6a6c6a" stroke-width="0.7"/></svg>
<div class="abs" style="left:121px;top:577.5px;width:23.5px;height:9px;background:#a6a6a4;color:#1a1a1a;font-size:6.5px;line-height:9px;padding-left:1.5px">1</div>
<div class="abs" style="left:145px;top:577.5px;width:8px;height:9px;background:#4a4c4a"><span style="position:absolute;left:1.8px;top:3.2px;border-left:2.2px solid transparent;border-right:2.2px solid transparent;border-top:3px solid #e0e0e0"></span></div>
<svg class="abs" style="left:154px;top:577px" width="24" height="10" viewBox="0 0 24 10"><path d="M6 3 L9 5.2 L6 7.5Z M14 3 L17 5.2 L14 7.5Z M18.5 3 V7.5" fill="#6a6c6a" stroke="#6a6c6a" stroke-width="0.7"/></svg>
<div class="abs" style="left:226.5px;top:577.5px;font-size:6.8px;line-height:9px;color:#dcdcdc;white-space:nowrap">吸管</div>
<div class="abs" style="left:294px;top:579.5px;border-top:2.5px solid transparent;border-bottom:2.5px solid transparent;border-left:3.5px solid #d8d8d8"></div>
<div class="abs" style="left:302px;top:579px;border-top:3px solid transparent;border-bottom:3px solid transparent;border-right:4.5px solid #eaeaea"></div>
<div class="abs" style="left:699px;top:577.5px;width:8px;height:9px;background:#a2a2a0"></div>
<div class="abs" style="left:1042px;top:579.5px;border-top:2.5px solid transparent;border-bottom:2.5px solid transparent;border-left:3.5px solid #c8c8c8"></div>
<!-- vertical scrollbar bits -->
<div class="abs" style="left:1054px;top:51px;border-left:3.5px solid transparent;border-right:3.5px solid transparent;border-bottom:4px solid #e0e0e0"></div>
<div class="abs" style="left:1053px;top:307.5px;width:8.5px;height:9.5px;background:#a9a9a9"></div>


<!-- ============ swatch library panel ============ -->
<div class="panel" style="left:770px;top:101px;width:132px;height:212px;background:#434041;border-color:#2d2b2c"></div>
<div class="abs" style="left:771px;top:102px;width:130px;height:7px;background:#2a2829"></div>
<div class="abs" style="left:771px;top:109px;width:130px;height:10.3px;background:#2d2b2c"></div>
<div class="abs" style="left:771px;top:109px;width:22px;height:10.3px;background:#343233"></div>
<div class="ptxt" style="left:775.5px;top:109.8px;color:#dedede;font-size:6.7px">肤色</div>
<svg class="abs" style="left:887px;top:104px" width="7" height="5" viewBox="0 0 7 5"><path d="M3 0.5 L0.5 2.5 L3 4.5Z M6.5 0.5 L4 2.5 L6.5 4.5Z" fill="#c8c8c8"/></svg>
<svg class="abs" style="left:894px;top:103.7px" width="5" height="5" viewBox="0 0 5 5"><path d="M0.8 0.8 L4.2 4.2 M4.2 0.8 L0.8 4.2" stroke="#d8d8d8" stroke-width="0.9"/></svg>
<svg class="abs" style="left:888px;top:110px" width="12" height="8" viewBox="0 0 12 8"><path d="M1 3 L4 3 L2.5 5 Z" fill="#d0d0d0"/><path d="M5.5 2 H10 M5.5 4 H10 M5.5 6 H10" stroke="#b0b0b0" stroke-width="0.9"/></svg>
<div class="abs" style="left:775px;top:123.5px;width:122px;height:9.5px;background:#a3a1a1"></div>
<svg class="abs" style="left:775.5px;top:123.5px" width="10" height="10" viewBox="0 0 10 10"><circle cx="4.8" cy="3.8" r="2.3" fill="none" stroke="#2a2a2a" stroke-width="0.9"/><path d="M3.2 5.6 L1 8.6" stroke="#2a2a2a" stroke-width="1.1"/></svg>
<div class="abs" style="left:774px;top:137px;width:118px;height:161px;background:#3d3a3b;border:1px solid #2f2d2e"></div>
<div class="abs" style="left:892px;top:137px;width:6px;height:161px;background:#302e2f"></div>
<div class="abs" style="left:893.2px;top:139px;border-left:1.8px solid transparent;border-right:1.8px solid transparent;border-bottom:2.5px solid #bdbdbd"></div>
<div class="abs" style="left:893.2px;top:292.5px;border-left:1.8px solid transparent;border-right:1.8px solid transparent;border-top:2.5px solid #bdbdbd"></div>
<svg class="abs" style="left:774px;top:136px" width="52" height="8" viewBox="0 0 52 8">
  <rect x="1.5" y="2" width="4" height="3.5" fill="#e8e8e8"/><path d="M1.5 5.5 L5.5 2" stroke="#c03030" stroke-width="0.6"/>
  <rect x="8" y="1.8" width="7.6" height="3.4" fill="#fbf7f1"/>
  <rect x="16" y="1.8" width="7.6" height="3.4" fill="#f3e9dc"/>
  <rect x="24" y="1.8" width="7.6" height="3.4" fill="#f1dfc6"/>
  <rect x="32" y="1.8" width="7.6" height="3.4" fill="#efd9b9"/>
  <rect x="40" y="1.8" width="7.6" height="3.4" fill="#ebd2aa"/>
</svg>
<svg class="abs" style="left:774px;top:297px" width="126" height="14" viewBox="0 0 126 14">
  <path d="M3.5 3 V9.5 M5.5 3 V9.5 M7.3 3.5 L9.5 9.5" stroke="#d0d0d0" stroke-width="1" fill="none"/><circle cx="11.5" cy="9" r="0.7" fill="#d0d0d0"/>
  <path d="M24.5 3.2 L20.5 6.2 L24.5 9.2Z" fill="#d0d0d0"/>
  <path d="M34.5 3.2 L38.5 6.2 L34.5 9.2Z" fill="#d0d0d0"/>
  <path d="M100 3 L107 9.5 M107 3 L100 9.5" stroke="#d0d0d0" stroke-width="1.1"/>
  <rect x="57" y="12" width="12" height="1.2" fill="#222"/>
</svg>

<!-- ============ pathfinder panel ============ -->
<div class="panel" style="left:737px;top:140.5px;width:132px;height:76px;background:#3e3d3c;border-color:#2b292a"></div>
<div class="abs" style="left:738px;top:141.5px;width:130px;height:7px;background:#2a2829"></div>
<div class="abs" style="left:738px;top:148.5px;width:130px;height:10px;background:#333132"></div>
<div class="abs" style="left:783px;top:148.5px;width:42px;height:10px;background:#474445"></div>
<div class="ptxt" style="left:742px;top:149.2px;color:#8e8c8c">变换</div>
<div class="ptxt" style="left:763.5px;top:149.2px;color:#8e8c8c">对齐</div>
<div class="ptxt" style="left:786px;top:149.2px;color:#e6e6e6">路径查找器</div>
<svg class="abs" style="left:853px;top:143.5px" width="7" height="5" viewBox="0 0 7 5"><path d="M3 0.5 L0.5 2.5 L3 4.5Z M6.5 0.5 L4 2.5 L6.5 4.5Z" fill="#c8c8c8"/></svg>
<svg class="abs" style="left:860.5px;top:143.2px" width="5" height="5" viewBox="0 0 5 5"><path d="M0.8 0.8 L4.2 4.2 M4.2 0.8 L0.8 4.2" stroke="#d8d8d8" stroke-width="0.9"/></svg>
<svg class="abs" style="left:855px;top:149.5px" width="12" height="8" viewBox="0 0 12 8"><path d="M1 3 L4 3 L2.5 5 Z" fill="#d0d0d0"/><path d="M5.5 2 H10 M5.5 4 H10 M5.5 6 H10" stroke="#b0b0b0" stroke-width="0.9"/></svg>
<div class="ptxt" style="left:740.5px;top:161.5px;color:#dadada">形状模式:</div>
<div class="ptxt" style="left:740.5px;top:188.2px;color:#dadada;font-weight:bold">路径查找器:</div>
<div class="abs" style="left:823.5px;top:174.3px;width:40.5px;height:9px;background:#4f4c4d;border:0.5px solid #5b5859;color:#7a7878;font-size:6.5px;line-height:8.5px;text-align:center">扩展</div>
<svg class="abs" style="left:737px;top:170px" width="132" height="46" viewBox="0 0 132 46">
  <g stroke="#c4c4c4" stroke-width="0.8" fill="none" opacity="0.9">
    <!-- shape modes y~8 -->
    <g transform="translate(10.8,8)"><rect x="-3.5" y="-3.5" width="5" height="5" fill="#cfcfcf"/><rect x="-1.5" y="-1.5" width="5" height="5" fill="#cfcfcf"/></g>
    <g transform="translate(29.5,8)"><rect x="-3.5" y="-3.5" width="5" height="5" fill="#cfcfcf"/><rect x="-1.5" y="-1.5" width="5" height="5" fill="#3e3d3c"/></g>
    <g transform="translate(51,8)"><rect x="-3.5" y="-3.5" width="5" height="5"/><rect x="-1.5" y="-1.5" width="5" height="5"/><rect x="-1.5" y="-1.5" width="3" height="3" fill="#cfcfcf" stroke="none"/></g>
    <g transform="translate(71.7,8)"><rect x="-3.5" y="-3.5" width="5" height="5" fill="#cfcfcf"/><rect x="-1.5" y="-1.5" width="5" height="5" fill="#cfcfcf"/><rect x="-1.3" y="-1.3" width="2.6" height="2.6" fill="#3e3d3c" stroke="none"/></g>
    <!-- pathfinders y~35.5 -->
    <g transform="translate(12,35.5)"><rect x="-4" y="-4" width="5" height="5"/><rect x="-1" y="-1" width="5" height="5" fill="#cfcfcf"/></g>
    <g transform="translate(33,35.5)"><rect x="-4" y="-4" width="5" height="5" fill="#a0a0a0"/><rect x="-1" y="-1" width="5" height="5" fill="#e0e0e0"/></g>
    <g transform="translate(54,35.5)"><rect x="-4" y="-4" width="5.5" height="5.5" fill="#b0b0b0"/><rect x="-0.5" y="-0.5" width="5" height="5" fill="#e0e0e0"/></g>
    <g transform="translate(75,35.5)"><rect x="-2" y="-2" width="4" height="4" fill="#cfcfcf"/><rect x="-4" y="-4" width="8" height="8" stroke="#6a6868" stroke-dasharray="1 1"/></g>
    <g transform="translate(96.5,35.5)"><rect x="-4" y="-4" width="5" height="5"/><rect x="-1" y="-1" width="5" height="5"/></g>
    <g transform="translate(118.5,35.5)"><rect x="-4" y="-1" width="5" height="5" fill="#cfcfcf"/><rect x="-1" y="-4" width="5" height="5"/></g>
  </g>
</svg>

<!-- ============ gradient panel ============ -->
<div class="panel" style="left:921.5px;top:80.5px;width:141px;height:139px;background:#3f3b3d;border-color:#2d2b2c"></div>
<div class="abs" style="left:922.5px;top:81.5px;width:139px;height:11px;background:#312f30"></div>
<div class="abs" style="left:944.5px;top:82.5px;width:25px;height:10px;background:#464344"></div>
<div class="ptxt" style="left:925.5px;top:83.2px;color:#8e8c8c">描边</div>
<div class="ptxt" style="left:945.5px;top:83.2px;color:#e6e6e6"><span style="display:inline-block;width:3.2px;height:3.2px;border:0.6px solid #dcdcdc;transform:rotate(45deg);margin:0 1.2px 1.6px 0.6px"></span>渐变</div>
<div class="ptxt" style="left:972.5px;top:83.2px;color:#8e8c8c">透明度</div>
<svg class="abs" style="left:1040px;top:85px" width="7" height="5" viewBox="0 0 7 5"><path d="M0.5 0.5 L3 2.5 L0.5 4.5Z M4 0.5 L6.5 2.5 L4 4.5Z" fill="#e0e0e0"/></svg>
<svg class="abs" style="left:1049px;top:83.5px" width="12" height="8" viewBox="0 0 12 8"><path d="M1 3 L4 3 L2.5 5 Z" fill="#d0d0d0"/><path d="M5.5 2 H10 M5.5 4 H10 M5.5 6 H10" stroke="#b0b0b0" stroke-width="0.9"/></svg>
<div class="abs" style="left:926.3px;top:96.7px;width:16px;height:16.5px;background:linear-gradient(90deg,#e8e8e8 0%,#f6f6f6 25%,#c4c4c4 65%,#7a7a7a 100%);border:0.5px solid #262626"></div>
<div class="abs" style="left:945px;top:104px;border-left:1.8px solid transparent;border-right:1.8px solid transparent;border-top:2.5px solid #d0d0d0"></div>
<div class="ptxt" style="left:953.5px;top:97.8px;color:#e0e0e0;font-size:7px;letter-spacing:0.3px">类型:</div>
<div class="abs" style="left:975px;top:96.7px;width:83.5px;height:9.5px;background:#565354;border:0.5px solid #605d5e"></div>
<div class="abs" style="left:1051.5px;top:100.5px;border-left:2px solid transparent;border-right:2px solid transparent;border-top:3px solid #e0e0e0"></div>
<div class="ptxt" style="left:953px;top:112.5px;color:#6c6a6a">描边:</div>
<div class="abs" style="left:975px;top:112px;width:11.5px;height:10px;border:0.5px solid #6c696a;background:#4d4a4b"><span style="position:absolute;left:2.5px;top:1.5px;width:5.5px;height:6px;border-left:1px solid #7c797a;border-right:1px solid #7c797a;background:#5e5b5c"></span></div>
<div class="abs" style="left:988.5px;top:112px;width:11.5px;height:10px;border:0.5px solid #6c696a;background:#4d4a4b"><span style="position:absolute;left:2.5px;top:1.5px;width:5.5px;height:6px;border-left:1px solid #7c797a;border-right:1px solid #7c797a;background:#5e5b5c"></span></div>
<div class="abs" style="left:1002px;top:112px;width:11.5px;height:10px;border:0.5px solid #6c696a;background:#4d4a4b"><span style="position:absolute;left:2.5px;top:1.5px;width:5.5px;height:6px;border-left:1px solid #7c797a;border-right:1px solid #7c797a;background:#5e5b5c"></span></div>
<svg class="abs" style="left:925px;top:115px" width="20" height="20" viewBox="0 0 20 20"><rect x="8" y="8" width="9.5" height="10" fill="#f6f6f6"/><rect x="10.5" y="10.5" width="4.5" height="5" fill="#3f3b3d"/><path d="M8.5 17.5 L17 8.5" stroke="#d03030" stroke-width="1.3"/><rect x="1.3" y="1.9" width="10.2" height="10.3" fill="#dbde52" stroke="#eef0b8" stroke-width="0.5"/></svg>
<svg class="abs" style="left:966px;top:128.5px" width="7" height="7" viewBox="0 0 7 7"><path d="M3.5 1 L6.3 6 H0.7Z" fill="none" stroke="#565354" stroke-width="0.8"/></svg>
<div class="abs" style="left:975px;top:127.2px;width:37px;height:9.5px;background:#6a6769"></div>
<div class="abs" style="left:1004.5px;top:127.2px;width:7.5px;height:9.5px;background:#737072"></div>
<svg class="abs" style="left:966px;top:143.5px" width="7" height="7" viewBox="0 0 7 7"><path d="M0.8 1 H6.2 V6 H0.8Z M3.5 1 V6" fill="none" stroke="#565354" stroke-width="0.8"/></svg>
<div class="abs" style="left:975px;top:142px;width:37px;height:9.5px;background:#6a6769"></div>
<div class="abs" style="left:1004.5px;top:142px;width:7.5px;height:9.5px;background:#737072"></div>
<div class="abs" style="left:928.5px;top:160px;width:113.5px;height:9.5px;background:linear-gradient(90deg,#fafafa 0%,#cfcfcf 35%,#8a8a8a 65%,#3a3a3a 88%,#050505 100%)"></div>
<svg class="abs" style="left:1046px;top:159px" width="11" height="11" viewBox="0 0 11 11"><path d="M2 3 H9 M3 3 L3.5 9.5 H7.5 L8 3 M4.5 2 H6.5" fill="none" stroke="#5e5b5c" stroke-width="0.9"/></svg>
<div class="ptxt" style="left:941.5px;top:186.5px;color:#6c6a6a">不透明度:</div>
<div class="abs" style="left:975px;top:186.5px;width:37px;height:9.5px;background:#6a6769"></div>
<div class="abs" style="left:1004.5px;top:186.5px;width:7.5px;height:9.5px;background:#737072"></div>
<div class="ptxt" style="left:956.5px;top:201.5px;color:#6c6a6a">位置:</div>
<div class="abs" style="left:975px;top:201px;width:37px;height:9.5px;background:#6a6769"></div>
<div class="abs" style="left:1004.5px;top:201px;width:7.5px;height:9.5px;background:#737072"></div>
<div class="abs" style="left:985px;top:217px;width:12px;height:1.2px;background:#1e1e1e"></div>

<!-- ============ right dock icons ============ -->
<svg class="abs" style="left:1063px;top:36px" width="17" height="200" viewBox="0 0 17 200">
  <rect x="4" y="9.2" width="11" height="1.3" fill="#262425"/>
  <rect x="0.5" y="67" width="16.5" height="15" fill="#2a2829"/>
  <g fill="none" stroke="#c0c0c0" stroke-width="1">
    <g transform="translate(10.5,19.3) scale(0.88)">
      <path d="M-6.5 1 C-6.5 -3 -2.5 -4.5 1.5 -4 C5.5 -3.5 6.5 -0.5 4.5 1 C3 2 4 3.5 2 4.5 C-1.5 5.5 -6.5 4.5 -6.5 1Z" fill="#cfcfcf" stroke="none"/>
      <circle cx="-3" cy="-1" r="1" fill="#3a3839" stroke="none"/><circle cx="0.5" cy="-1.5" r="1" fill="#3a3839" stroke="none"/><circle cx="-2" cy="2.2" r="1" fill="#3a3839" stroke="none"/>
    </g>
    <g transform="translate(10.5,36.4) scale(0.88)"><path d="M-5 -5.5 V5 H5 C5 -1 1 -5 -5 -5.5Z" fill="#9c9c9c"/></g>
    <path d="M4.5 48.3 H15.5" stroke="#555354" stroke-width="0.8"/>
    <g transform="translate(10.5,58.5) scale(0.88)"><path d="M-5.5 -3.5 H5.5 M-5.5 0 H5.5 M-5.5 3.5 H5.5" stroke-width="1.5"/></g>
    <g transform="translate(10.5,73.8) scale(0.88)"><rect x="-5.5" y="-4.5" width="11" height="9" fill="#8a8a8a"/><rect x="-5" y="-4" width="4" height="8" fill="#2e2e2e" stroke="none"/></g>
    <g transform="translate(10.5,90.9) scale(0.88)"><circle cx="-1.5" cy="-1" r="4.2" fill="#8a8a8a"/><circle cx="1.5" cy="1" r="4.2"/></g>
    <path d="M4.5 103.5 H15.5" stroke="#555354" stroke-width="0.8"/>
    <g transform="translate(10.5,113.7) scale(0.88)"><path d="M-4 3.5 C-6.5 3.5 -7 0 -4.5 -1 C-4 -4 0.5 -4.5 1.5 -2 C5 -2.5 6.5 3 3 3.5 Z" fill="#6a6a6a"/><circle cx="-0.7" cy="0.5" r="1.8"/></g>
    <g transform="translate(10.5,130) scale(0.88)"><circle r="3.8" fill="#cfcfcf"/><circle r="5.6" stroke-dasharray="1.2 1.2" stroke-width="1.3"/></g>
    <g transform="translate(10.5,145.4) scale(0.88)"><rect x="-2.5" y="-5" width="8" height="8"/><circle cx="-2.5" cy="3" r="3.2" fill="#5a5859"/></g>
    <path d="M4.5 156.6 H15.5" stroke="#555354" stroke-width="0.8"/>
    <g transform="translate(10.5,168.5) scale(0.88)"><path d="M0 -5.5 L5.5 -2.5 L0 0.5 L-5.5 -2.5 Z" fill="#e0e0e0"/><path d="M-5.5 0.5 L0 3.5 L5.5 0.5" stroke-width="1.2"/></g>
    <g transform="translate(10.5,183.5) scale(0.88)"><rect x="-5.5" y="-5.5" width="7" height="7" fill="#3a3839"/><rect x="-2" y="-2" width="7" height="7" fill="#3a3839"/></g>
  </g>
</svg>


<!-- ===================== WATERMARK ===================== -->
<svg class="abs" style="left:888px;top:515px" width="50" height="45" viewBox="888 515 50 45">
  <g fill="#e9e7e8" stroke="#514f50" stroke-width="1">
    <path d="M906.6 519.2 C898.2 519.2 892.2 524.9 892.2 531.8 C892.2 535.9 894.3 539.4 897.6 541.7 L896.3 547.2 L901.8 543.8 C903.3 544.2 904.9 544.4 906.6 544.4 C915 544.4 921 538.7 921 531.8 C921 524.9 915 519.2 906.6 519.2 Z"/>
    <path d="M921.2 530.4 C913.7 530.4 908 535.2 908 541.1 C908 547 913.7 551.8 921.2 551.8 C922.8 551.8 924.3 551.6 925.7 551.2 L930.9 554.3 L929.7 549.3 C932.6 547.3 934.4 544.4 934.4 541.1 C934.4 535.2 928.7 530.4 921.2 530.4 Z"/>
  </g>
  <g fill="#4a4849">
    <circle cx="901.8" cy="528.3" r="1.8"/><circle cx="912.6" cy="528.3" r="1.8"/>
    <circle cx="916.2" cy="538.6" r="1.6"/><circle cx="925.8" cy="538.6" r="1.6"/>
  </g>
</svg>
<div id="wm1">米你教育</div>
<div id="wm2">头条号 / PS视觉设计</div>


</div>
</body>
</html>
